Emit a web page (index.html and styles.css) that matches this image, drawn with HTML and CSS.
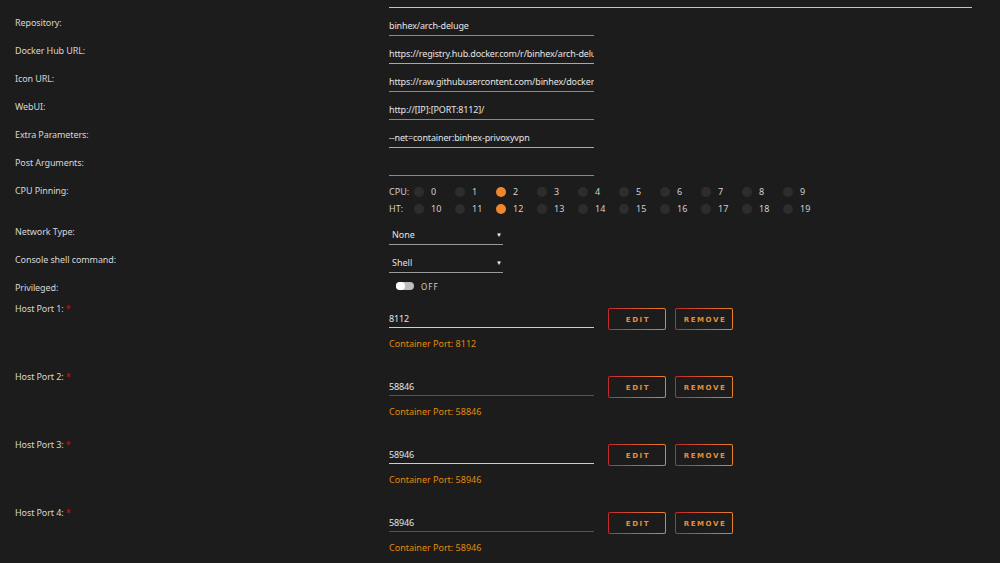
FILE: index.html
```html
<!DOCTYPE html>
<html>
<head>
<meta charset="utf-8">
<link rel="stylesheet" href="styles.css">
</head>
<body>
<div class="form">
  <div class="topline-row"><div class="spacer"></div><div class="topline"></div></div>

  <div class="row"><div class="label">Repository:</div><div class="control"><div class="input u1">binhex/arch-deluge</div></div></div>
  <div class="row"><div class="label">Docker Hub URL:</div><div class="control"><div class="input u2">https://registry.hub.docker.com/r/binhex/arch-deluge</div></div></div>
  <div class="row"><div class="label">Icon URL:</div><div class="control"><div class="input u1">https://raw.githubusercontent.com/binhex/docker-templates/master/binhex/images/deluge-icon.png</div></div></div>
  <div class="row"><div class="label">WebUI:</div><div class="control"><div class="input u1">http://[IP]:[PORT:8112]/</div></div></div>
  <div class="row"><div class="label">Extra Parameters:</div><div class="control"><div class="input u2">--net=container:binhex-privoxyvpn</div></div></div>
  <div class="row"><div class="label">Post Arguments:</div><div class="control"><div class="input u1"></div></div></div>

  <div class="row cpu-row"><div class="label">CPU Pinning:</div>
    <div class="control cpu">
      <div class="cpu-line"><span class="cpu-lbl">CPU:</span>
        <span class="core"><i class="dot"></i>0</span><span class="core"><i class="dot"></i>1</span><span class="core"><i class="dot on"></i>2</span><span class="core"><i class="dot"></i>3</span><span class="core"><i class="dot"></i>4</span><span class="core"><i class="dot"></i>5</span><span class="core"><i class="dot"></i>6</span><span class="core"><i class="dot"></i>7</span><span class="core"><i class="dot"></i>8</span><span class="core"><i class="dot"></i>9</span>
      </div>
      <div class="cpu-line"><span class="cpu-lbl">HT:</span>
        <span class="core"><i class="dot"></i>10</span><span class="core"><i class="dot"></i>11</span><span class="core"><i class="dot on"></i>12</span><span class="core"><i class="dot"></i>13</span><span class="core"><i class="dot"></i>14</span><span class="core"><i class="dot"></i>15</span><span class="core"><i class="dot"></i>16</span><span class="core"><i class="dot"></i>17</span><span class="core"><i class="dot"></i>18</span><span class="core"><i class="dot"></i>19</span>
      </div>
    </div>
  </div>

  <div class="row"><div class="label">Network Type:</div><div class="control"><div class="select">None<span class="arrow">▼</span></div></div></div>
  <div class="row"><div class="label">Console shell command:</div><div class="control"><div class="select">Shell<span class="arrow">▼</span></div></div></div>
  <div class="row priv-row"><div class="label">Privileged:</div><div class="control toggle-wrap"><span class="toggle"><span class="knob"></span></span><span class="off">OFF</span></div></div>

  <div class="row port-row"><div class="label">Host Port 1: <span class="req">*</span></div>
    <div class="control port">
      <div class="port-line"><div class="input pin light">8112</div><button class="btn">EDIT</button><button class="btn">REMOVE</button></div>
      <div class="cport">Container Port: 8112</div>
    </div>
  </div>
  <div class="row port-row"><div class="label">Host Port 2: <span class="req">*</span></div>
    <div class="control port">
      <div class="port-line"><div class="input pin dark">58846</div><button class="btn">EDIT</button><button class="btn">REMOVE</button></div>
      <div class="cport">Container Port: 58846</div>
    </div>
  </div>
  <div class="row port-row"><div class="label">Host Port 3: <span class="req">*</span></div>
    <div class="control port">
      <div class="port-line"><div class="input pin light">58946</div><button class="btn">EDIT</button><button class="btn">REMOVE</button></div>
      <div class="cport">Container Port: 58946</div>
    </div>
  </div>
  <div class="row port-row"><div class="label">Host Port 4: <span class="req">*</span></div>
    <div class="control port">
      <div class="port-line"><div class="input pin dark">58946</div><button class="btn">EDIT</button><button class="btn">REMOVE</button></div>
      <div class="cport">Container Port: 58946</div>
    </div>
  </div>
</div>
</body>
</html>
```

FILE: styles.css
```css
html, body {
  margin: 0;
  padding: 0;
  background: #1c1c1c;
  height: 100%;
  overflow: hidden;
}
body {
  font-family: "Noto Sans", "Open Sans", sans-serif;
  font-size: 9px;
  color: #d6d6d6;
}
.form {
  padding: 7px 0 0 15px;
}
.topline-row {
  display: flex;
  height: 1px;
}
.spacer {
  width: 374px;
  flex: none;
}
.topline {
  width: 583px;
  height: 1px;
  background: #c4c4c4;
}
.row {
  display: flex;
  height: 28px;
}
.label {
  width: 374px;
  flex: none;
  margin-top: 9px;
  line-height: 12px;
  height: 12px;
  white-space: nowrap;
  letter-spacing: -0.1px;
}
.req {
  color: #d01010;
}
.control {
  flex: none;
}
.input {
  width: 205px;
  height: 28px;
  box-sizing: border-box;
  padding-top: 12px;
  line-height: 12px;
  white-space: nowrap;
  overflow: hidden;
  color: #e4e4e4;
  letter-spacing: -0.15px;
  border-bottom: 1px solid #8a8a8a;
}
.input.u2 {
  border-bottom-color: #a8a8a8;
}
.cpu-row {
  height: 41px;
}
.cpu {
  padding-top: 7px;
}
.cpu-line {
  display: flex;
  align-items: center;
  height: 17px;
  color: #d0d0d0;
}
.cpu-lbl {
  width: 25px;
  flex: none;
}
.core {
  width: 41px;
  flex: none;
  display: flex;
  align-items: center;
}
.dot {
  width: 10px;
  height: 10px;
  border-radius: 50%;
  background: #2d2d2d;
  margin-right: 7px;
  flex: none;
}
.dot.on {
  background: #f0872e;
}
.select {
  width: 114px;
  height: 28px;
  box-sizing: border-box;
  padding: 12px 0 0 3px;
  line-height: 12px;
  border-bottom: 1px solid #9a9a9a;
  display: flex;
  justify-content: space-between;
  color: #e0e0e0;
}
.arrow {
  font-size: 6px;
  margin-right: 1px;
  color: #f0f0f0;
}
.priv-row {
  height: 21px;
}
.toggle-wrap {
  display: flex;
  align-items: center;
  padding: 7px 0 0 7px;
  height: 12px;
}
.toggle {
  width: 18px;
  height: 8px;
  border-radius: 4px;
  background: #bdbdbd;
  position: relative;
  display: inline-block;
}
.knob {
  position: absolute;
  left: 0;
  top: 0;
  width: 9px;
  height: 8px;
  border-radius: 4px;
  background: #ffffff;
}
.off {
  margin-left: 7px;
  font-size: 8px;
  letter-spacing: 1px;
  color: #cfcfcf;
}
.port-row {
  height: 68px;
}
.port {
  padding-top: 14px;
}
.port-line {
  display: flex;
  align-items: flex-start;
  height: 22px;
}
.input.pin {
  height: 20px;
  padding-top: 5px;
}
.input.pin.light {
  border-bottom: 1px solid #cdcdcd;
}
.input.pin.dark {
  border-bottom: 1px solid #545454;
}
.btn {
  width: 58px;
  height: 22px;
  box-sizing: border-box;
  margin-left: 14px;
  border: 1px solid transparent;
  border-radius: 2px;
  background:
    linear-gradient(#1c1c1c, #1c1c1c) padding-box,
    linear-gradient(90deg, #c42a2a, #e6802e) border-box;
  color: #ec8c30;
  font-family: "DejaVu Sans", "Noto Sans", sans-serif;
  font-size: 7px;
  font-weight: bold;
  letter-spacing: 1.6px;
  padding: 1px 0 0 2px;
  cursor: pointer;
}
.btn + .btn {
  margin-left: 9px;
}
.cport {
  margin-top: 8px;
  line-height: 12px;
  color: #e08a0c;
}
```
